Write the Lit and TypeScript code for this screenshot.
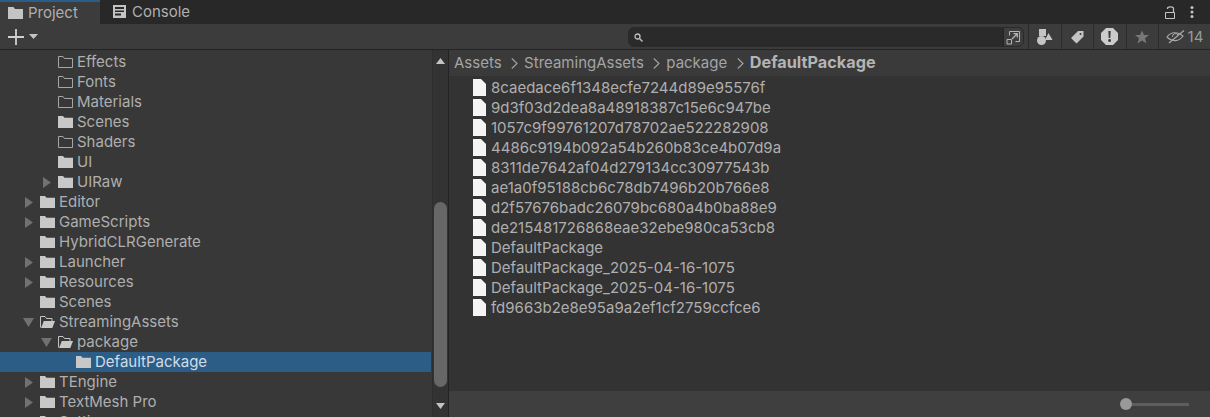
import { LitElement, css, html, svg } from "lit";
import { customElement } from "lit/decorators.js";

type FolderKind = "closed" | "open" | "empty";

interface TreeRow {
  name: string;
  depth: number;
  kind: FolderKind;
  arrow?: "right" | "down";
  selected?: boolean;
}

const TREE: TreeRow[] = [
  { name: "Effects", depth: 3, kind: "empty" },
  { name: "Fonts", depth: 3, kind: "empty" },
  { name: "Materials", depth: 3, kind: "empty" },
  { name: "Scenes", depth: 3, kind: "closed" },
  { name: "Shaders", depth: 3, kind: "empty" },
  { name: "UI", depth: 3, kind: "closed" },
  { name: "UIRaw", depth: 3, kind: "closed", arrow: "right" },
  { name: "Editor", depth: 2, kind: "closed", arrow: "right" },
  { name: "GameScripts", depth: 2, kind: "closed", arrow: "right" },
  { name: "HybridCLRGenerate", depth: 2, kind: "closed" },
  { name: "Launcher", depth: 2, kind: "closed", arrow: "right" },
  { name: "Resources", depth: 2, kind: "closed", arrow: "right" },
  { name: "Scenes", depth: 2, kind: "closed" },
  { name: "StreamingAssets", depth: 2, kind: "open", arrow: "down" },
  { name: "package", depth: 3, kind: "open", arrow: "down" },
  { name: "DefaultPackage", depth: 4, kind: "closed", selected: true },
  { name: "TEngine", depth: 2, kind: "closed", arrow: "right" },
  { name: "TextMesh Pro", depth: 2, kind: "closed", arrow: "right" },
  { name: "Settings", depth: 2, kind: "closed" },
];

const FILES = [
  "8caedace6f1348ecfe7244d89e95576f",
  "9d3f03d2dea8a48918387c15e6c947be",
  "1057c9f99761207d78702ae522282908",
  "4486c9194b092a54b260b83ce4b07d9a",
  "8311de7642af04d279134cc30977543b",
  "ae1a0f95188cb6c78db7496b20b766e8",
  "d2f57676badc26079bc680a4b0ba88e9",
  "de215481726868eae32ebe980ca53cb8",
  "DefaultPackage",
  "DefaultPackage_2025-04-16-1075",
  "DefaultPackage_2025-04-16-1075",
  "fd9663b2e8e95a9a2ef1cf2759ccfce6",
];

const folderIcon = (kind: FolderKind) => {
  if (kind === "empty") {
    return svg`<svg class="folder" width="15" height="14" viewBox="0 0 15 14"><path d="M0.500 12.500V1.500H5L6.500 3.500H14.500V12.500Z" fill="none" stroke="#a6a6a6" stroke-width="1"/></svg>`;
  }
  if (kind === "open") {
    return svg`<svg class="folder" width="15" height="14" viewBox="0 0 15 14"><path d="M0.500 12.500V1.500H5L6.500 3.500H12V6" fill="none" stroke="#c4c4c4" stroke-width="1"/><path d="M3.800 6H15L12.300 13H1Z" fill="#c8c8c8"/></svg>`;
  }
  return svg`<svg class="folder" width="15" height="14" viewBox="0 0 15 14"><path d="M0 13V1H5L6.500 2.800H15V13Z" fill="#c8c8c8"/></svg>`;
};

const arrowIcon = (dir: "right" | "down") =>
  dir === "right"
    ? svg`<svg class="arrow-right" width="8" height="11" viewBox="0 0 8 11"><path d="M0 0L8 5.500L0 11Z" fill="#717171"/></svg>`
    : svg`<svg width="11" height="9" viewBox="0 0 11 9"><path d="M0 0H11L5.500 9Z" fill="#717171"/></svg>`;

const chevron = () => html`<span class="crumb-sep">
  <svg width="7" height="11" viewBox="0 0 7 11"><path d="M0.800 0.500L6 5.500L0.800 10.500" fill="none" stroke="#a0a0a0" stroke-width="1.200"/></svg>
</span>`;

@customElement("app-root")
export class AppRoot extends LitElement {
  static styles = css`
    :host {
      display: block;
      width: 1210px;
      height: 417px;
      overflow: hidden;
      font-family: Inter, "Liberation Sans", sans-serif;
      font-size: 15px;
      color: #afafaf;
      background: #383838;
    }
    .window {
      display: flex;
      flex-direction: column;
      height: 417px;
    }

    /* tab strip */
    .tabs {
      display: flex;
      height: 24px;
      flex: none;
      background: #282828;
      align-items: stretch;
    }
    .tab {
      display: flex;
      align-items: center;
      gap: 5px;
      height: 24px;
      box-sizing: border-box;
      padding-left: 8px;
      padding-bottom: 1px;
    }
    .tab.active {
      width: 100px;
      background: #3c3c3c;
      border-top: 2px solid #2c5d87;
      padding-bottom: 2px;
    }
    .tab.plain {
      padding-left: 13px;
      gap: 6px;
    }
    .tab-actions {
      margin-left: auto;
      display: flex;
      align-items: center;
      gap: 14px;
      padding-right: 16px;
    }

    /* toolbar */
    .toolbar {
      display: flex;
      align-items: stretch;
      height: 26px;
      flex: none;
      box-sizing: border-box;
      background: #3c3c3c;
      border-bottom: 1px solid #232323;
    }
    .add {
      display: flex;
      align-items: center;
      gap: 5px;
      padding-left: 8px;
    }
    .search {
      margin-left: 590px;
      margin-top: 3px;
      width: 396px;
      height: 20px;
      flex: none;
      display: flex;
      box-sizing: border-box;
      border: 1px solid #2a2a2a;
      border-radius: 6px;
      background: #2a2a2a;
      overflow: hidden;
    }
    .search-input {
      width: 374px;
      display: flex;
      align-items: center;
      padding-left: 5px;
      box-sizing: border-box;
    }
    .search-btn {
      flex: 1;
      display: flex;
      align-items: center;
      justify-content: center;
      background: #3e3e3e;
      border-left: 1px solid #242424;
    }
    .tools {
      margin-left: 4px;
      flex: 1;
      display: flex;
    }
    .tool {
      width: 32.5px;
      display: flex;
      align-items: center;
      justify-content: center;
      border-left: 1px solid #2b2b2b;
      box-sizing: border-box;
    }
    .hidden-count {
      flex: 1;
      gap: 3px;
      color: #9a9a9a;
    }

    /* body */
    .main {
      flex: 1;
      display: flex;
      min-height: 0;
    }
    .tree {
      width: 432px;
      flex: none;
      overflow: hidden;
      padding-top: 2px;
      box-sizing: border-box;
      background: #383838;
    }
    .row {
      height: 20px;
      display: flex;
      align-items: center;
      white-space: nowrap;
    }
    .row.selected {
      margin-right: 1px;
      background: #2c5d87;
      color: #d0dde8;
    }
    .row-arrow {
      width: 18px;
      flex: none;
      box-sizing: border-box;
      padding-left: 1px;
      display: flex;
      align-items: center;
    }
    .arrow-right {
      margin-left: 2px;
    }
    .folder {
      flex: none;
      margin-right: 4px;
    }
    .label {
      margin-top: -2px;
    }

    .scrollbar {
      width: 17px;
      flex: none;
      display: flex;
      flex-direction: column;
      align-items: center;
      box-sizing: border-box;
      background: #333333;
      border-left: 1px solid #2e2e2e;
      border-right: 1px solid #232323;
    }
    .scroll-btn {
      height: 22px;
      flex: none;
      display: flex;
      align-items: center;
      justify-content: center;
    }
    .track {
      flex: 1;
      width: 100%;
      display: flex;
      flex-direction: column;
      align-items: center;
    }
    .thumb {
      margin-top: 130px;
      width: 13px;
      height: 185px;
      border-radius: 7px;
      background: #676767;
    }

    .pane {
      flex: 1;
      min-width: 0;
      display: flex;
      flex-direction: column;
      background: #333333;
    }
    .crumbs {
      height: 26px;
      flex: none;
      display: flex;
      align-items: center;
      padding-left: 5px;
      padding-bottom: 2px;
      box-sizing: border-box;
      background: #3a3a3a;
      color: #a4a4a4;
    }
    .crumb-sep {
      display: flex;
      margin: 2px 6px 0 9.5px;
    }
    .crumb-current {
      font-size: 16.25px;
      font-weight: 700;
      color: #b4b4b4;
    }
    .files {
      flex: 1;
      padding-top: 1px;
      min-height: 0;
    }
    .file {
      height: 20px;
      display: flex;
      align-items: center;
      gap: 5px;
      padding-left: 24px;
      white-space: nowrap;
    }
    .footer {
      height: 26px;
      flex: none;
      display: flex;
      align-items: center;
      justify-content: flex-end;
      padding-right: 21px;
      background: #3f3f3f;
    }
    .slider {
      width: 63px;
      height: 3px;
      background: #5d5d5d;
      position: relative;
    }
    .knob {
      position: absolute;
      left: -6px;
      top: -5px;
      width: 12px;
      height: 12px;
      border-radius: 50%;
      background: #999999;
    }
  `;

  renderTreeRow(row: TreeRow) {
    // every depth step is 18px, arrow column sits just before the folder
    const indent = (row.depth - 1) * 18 + 4;
    return html`
      <div class="row ${row.selected ? "selected" : ""}">
        <div class="row-arrow" style="margin-left: ${indent}px">
          ${row.arrow ? arrowIcon(row.arrow) : ""}
        </div>
        ${folderIcon(row.kind)}
        <span class="label">${row.name}</span>
      </div>
    `;
  }

  render() {
    return html`
      <div class="window">
        <div class="tabs">
          <div class="tab active">
            <svg width="15" height="13" viewBox="0 0 15 13"><path d="M0 13V1H5.500L7 3H15V13Z" fill="#c4c4c4"/></svg>
            <span>Project</span>
          </div>
          <div class="tab plain">
            <svg width="13" height="13" viewBox="0 0 13 13"><path fill-rule="evenodd" d="M0 0H13V13H0Z M2 2V4H11V2Z M2 5.500V7H11V5.500Z M2 8.500V10.500H8V8.500Z" fill="#c4c4c4"/></svg>
            <span>Console</span>
          </div>
          <div class="tab-actions">
            <svg width="11" height="13" viewBox="0 0 11 13"><path d="M0.500 6.500H9.500V12.500H0.500Z" fill="none" stroke="#c4c4c4"/><path d="M2.500 3V2.500C2.500 0.300 8.500 0.300 8.500 2.500V6" fill="none" stroke="#c4c4c4" stroke-width="1.200"/></svg>
            <svg width="4" height="12" viewBox="0 0 4 12"><circle cx="2" cy="1.500" r="1.500" fill="#c4c4c4"/><circle cx="2" cy="6" r="1.500" fill="#c4c4c4"/><circle cx="2" cy="10.500" r="1.500" fill="#c4c4c4"/></svg>
          </div>
        </div>

        <div class="toolbar">
          <div class="add">
            <svg width="16" height="16" viewBox="0 0 16 16"><path d="M8 0V16M0 8H16" stroke="#d0d0d0" stroke-width="1.800"/></svg>
            <svg width="9" height="5" viewBox="0 0 9 5"><path d="M0 0H9L4.500 5Z" fill="#c4c4c4"/></svg>
          </div>
          <div class="search">
            <div class="search-input">
              <svg width="9" height="9" viewBox="0 0 9 9"><circle cx="3.500" cy="3.500" r="2.500" fill="none" stroke="#bdbdbd" stroke-width="1.300"/><path d="M5.500 5.500L8.500 8.500" stroke="#bdbdbd" stroke-width="1.500"/></svg>
            </div>
            <div class="search-btn">
              <svg width="15" height="15" viewBox="0 0 15 15"><path d="M3.500 5.500V1.500H13.500V11.500H9.500" fill="none" stroke="#b4b4b4"/><path d="M1 9.500H5.500V14H1Z" fill="none" stroke="#b4b4b4"/><path d="M6 9L11 4M7.500 3.700H11.300V7.500" fill="none" stroke="#b4b4b4" stroke-width="1.300"/></svg>
            </div>
          </div>
          <div class="tools">
            <div class="tool">
              <svg width="16" height="16" viewBox="0 0 16 16"><path d="M2 0H9V7H2Z" fill="#c4c4c4"/><circle cx="4.500" cy="11.500" r="4.500" fill="#c4c4c4"/><path d="M11.500 4L15.500 11H8Z" fill="#c4c4c4"/></svg>
            </div>
            <div class="tool">
              <svg width="14" height="14" viewBox="0 0 14 14"><path fill-rule="evenodd" d="M8 1H13.500V6.500L6.500 13.500L1 8Z M10.500 3A1 1 0 1 0 10.600 5A1 1 0 1 0 10.500 3Z" fill="#c4c4c4"/></svg>
            </div>
            <div class="tool">
              <svg width="17" height="17" viewBox="0 0 17 17"><path fill-rule="evenodd" d="M5 0H12L17 5V12L12 17H5L0 12V5Z M7.300 3H9.700L9.300 10H7.700Z M8.500 11A1.400 1.400 0 1 0 8.600 14A1.400 1.400 0 1 0 8.500 11Z" fill="#cccccc"/></svg>
            </div>
            <div class="tool">
              <svg width="14" height="14" viewBox="0 0 14 14"><path d="M7 0.500L9 5H14L10 8.300L11.500 13.500L7 10.500L2.500 13.500L4 8.300L0 5H5Z" fill="#777777"/></svg>
            </div>
            <div class="tool hidden-count">
              <svg width="19" height="15" viewBox="0 0 19 15"><path d="M1 8C5 2.500 12 2.500 17 7C13 13 6 13 1 8Z" fill="none" stroke="#a8a8a8" stroke-width="1.100"/><path d="M6.500 8A3 3 0 0 1 12 6" fill="none" stroke="#a8a8a8"/><path d="M3 14L18 1.500" stroke="#a8a8a8" stroke-width="1.300"/></svg>
              <span>14</span>
            </div>
          </div>
        </div>

        <div class="main">
          <div class="tree">${TREE.map((row) => this.renderTreeRow(row))}</div>
          <div class="scrollbar">
            <div class="scroll-btn">
              <svg width="9" height="6" viewBox="0 0 9 6"><path d="M0 6H9L4.500 0Z" fill="#c4c4c4"/></svg>
            </div>
            <div class="track"><div class="thumb"></div></div>
            <div class="scroll-btn">
              <svg width="9" height="6" viewBox="0 0 9 6"><path d="M0 0H9L4.500 6Z" fill="#c4c4c4"/></svg>
            </div>
          </div>
          <div class="pane">
            <div class="crumbs">
              <span>Assets</span>
              ${chevron()}
              <span>StreamingAssets</span>
              ${chevron()}
              <span>package</span>
              ${chevron()}
              <span class="crumb-current">DefaultPackage</span>
            </div>
            <div class="files">
              ${FILES.map(
                (name) => html`
                  <div class="file">
                    <svg width="13" height="17" viewBox="0 0 13 17"><path d="M0 0H8L13 5V17H0Z" fill="#f4f4f4"/></svg>
                    <span>${name}</span>
                  </div>
                `
              )}
            </div>
            <div class="footer">
              <div class="slider"><div class="knob"></div></div>
            </div>
          </div>
        </div>
      </div>
    `;
  }
}
